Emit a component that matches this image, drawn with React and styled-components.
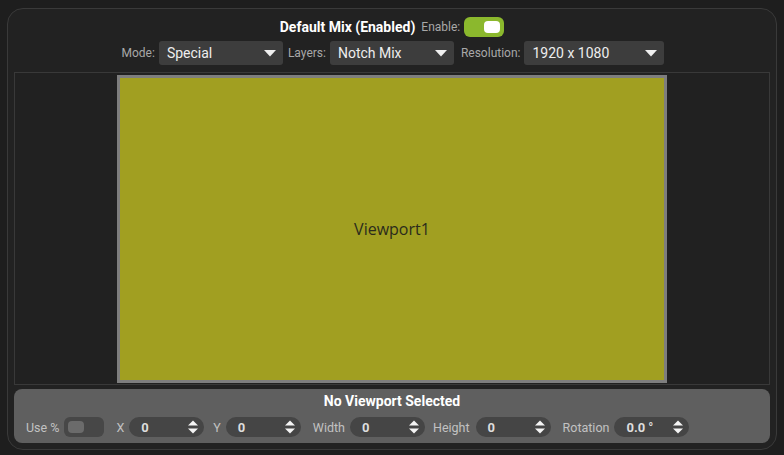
import styled, { createGlobalStyle } from "styled-components";

const GlobalStyle = createGlobalStyle`
  body {
    margin: 0;
    background: #1e1e1e;
    font-family: Roboto, "Liberation Sans", sans-serif;
  }
`;

const Caret = () => (
  <svg width="12" height="7" viewBox="0 0 12 7">
    <path d="M0 0 L12 0 L6 6.5 Z" fill="#f0f0f0" />
  </svg>
);

const Spinner = () => (
  <svg width="12" height="16" viewBox="0 0 12 16">
    <path d="M1 6.5 L6 1.5 L11 6.5 Z" fill="#f4f4f4" />
    <path d="M1 9.5 L11 9.5 L6 14.5 Z" fill="#f4f4f4" />
  </svg>
);

const App = () => {
  return (
    <>
      <GlobalStyle />
      <Panel>
        <TitleRow>
          <Title>Default Mix (Enabled)</Title>
          <Label>Enable:</Label>
          <Toggle $on>
            <Knob $on />
          </Toggle>
        </TitleRow>
        <SelectRow>
          <Label>Mode:</Label>
          <Select $w={124}>
            Special <Caret />
          </Select>
          <Label $ml={5}>Layers:</Label>
          <Select $w={124}>
            Notch Mix <Caret />
          </Select>
          <Label $ml={7}>Resolution:</Label>
          <Select $w={140}>
            1920 x 1080 <Caret />
          </Select>
        </SelectRow>
        <Canvas>
          <Viewport>Viewport1</Viewport>
        </Canvas>
        <Inspector>
          <InspectorTitle>No Viewport Selected</InspectorTitle>
          <FieldRow>
            <Field>
              <FieldLabel>Use %</FieldLabel>
              <Toggle>
                <Knob />
              </Toggle>
            </Field>
            <Field $ml={12}>
              <FieldLabel>X</FieldLabel>
              <NumberInput>
                0 <Spinner />
              </NumberInput>
            </Field>
            <Field $ml={9}>
              <FieldLabel>Y</FieldLabel>
              <NumberInput>
                0 <Spinner />
              </NumberInput>
            </Field>
            <Field $ml={12}>
              <FieldLabel>Width</FieldLabel>
              <NumberInput>
                0 <Spinner />
              </NumberInput>
            </Field>
            <Field $ml={8} $gap={6}>
              <FieldLabel>Height</FieldLabel>
              <NumberInput>
                0 <Spinner />
              </NumberInput>
            </Field>
            <Field $ml={12}>
              <FieldLabel>Rotation</FieldLabel>
              <NumberInput>
                0.0 ° <Spinner />
              </NumberInput>
            </Field>
          </FieldRow>
        </Inspector>
      </Panel>
    </>
  );
};

const Panel = styled.div`
  box-sizing: border-box;
  margin: 8px 7px 0 7px;
  height: 442px;
  border: 1px solid #3a3a3a;
  border-radius: 16px;
  background: #222222;
  padding: 0 6px;
  display: flex;
  flex-direction: column;
`;

const TitleRow = styled.div`
  display: flex;
  align-items: center;
  justify-content: center;
  height: 20px;
  margin-top: 8px;
`;

const Title = styled.div`
  color: #ffffff;
  font-size: 14px;
  font-weight: 700;
  margin-right: 6px;
`;

const Label = styled.span`
  color: #a8a8a8;
  font-size: 12px;
  margin-left: ${(p) => p.$ml || 0}px;
  margin-right: 4px;
`;

const Toggle = styled.div`
  box-sizing: border-box;
  width: 40px;
  height: 20px;
  border-radius: 6px;
  background: ${(p) => (p.$on ? "#8bb82d" : "#474747")};
  display: flex;
  align-items: center;
  justify-content: ${(p) => (p.$on ? "flex-end" : "flex-start")};
  padding: 0 4px;
`;

const Knob = styled.div`
  width: 16px;
  height: 12px;
  border-radius: 4px;
  background: ${(p) => (p.$on ? "#ffffff" : "#6b6b6b")};
`;

const SelectRow = styled.div`
  display: flex;
  align-items: center;
  justify-content: center;
  margin-top: 4px;
  height: 24px;
  padding-left: 2px;
`;

const Select = styled.div`
  box-sizing: border-box;
  width: ${(p) => p.$w}px;
  height: 24px;
  border-radius: 3px;
  background: #3d3d3d;
  color: #eeeeee;
  font-size: 14px;
  display: flex;
  align-items: center;
  justify-content: space-between;
  padding: 0 7px 0 8px;
`;

const Canvas = styled.div`
  box-sizing: border-box;
  margin-top: 7px;
  height: 313px;
  border: 1px solid #393939;
  background: #212121;
  display: flex;
  align-items: center;
  justify-content: center;
`;

const Viewport = styled.div`
  box-sizing: border-box;
  width: 550px;
  height: 308px;
  border: 3px solid #7e7e7e;
  background: #a19f21;
  display: flex;
  align-items: center;
  justify-content: center;
  color: #2b2b1c;
  font-family: "Open Sans", "Liberation Sans", sans-serif;
  font-size: 16px;
`;

const Inspector = styled.div`
  margin-top: 4px;
  height: 54px;
  border-radius: 8px;
  background: #5f5f5f;
  display: flex;
  flex-direction: column;
`;

const InspectorTitle = styled.div`
  color: #ffffff;
  font-size: 14px;
  font-weight: 700;
  text-align: center;
  margin-top: 4px;
  line-height: 17px;
`;

const FieldRow = styled.div`
  display: flex;
  align-items: center;
  margin-top: 7px;
  padding-left: 12px;
`;

const Field = styled.div`
  display: flex;
  align-items: center;
  gap: ${(p) => p.$gap || 5}px;
  margin-left: ${(p) => p.$ml || 0}px;
`;

const FieldLabel = styled.span`
  color: #c2c2c2;
  font-size: 12.5px;
`;

const NumberInput = styled.div`
  box-sizing: border-box;
  width: 75px;
  height: 20px;
  border-radius: 10px;
  background: #454545;
  color: #dddddd;
  font-size: 13px;
  font-weight: 700;
  display: flex;
  align-items: center;
  justify-content: space-between;
  padding: 0 5px 0 12px;
`;

export default App;
